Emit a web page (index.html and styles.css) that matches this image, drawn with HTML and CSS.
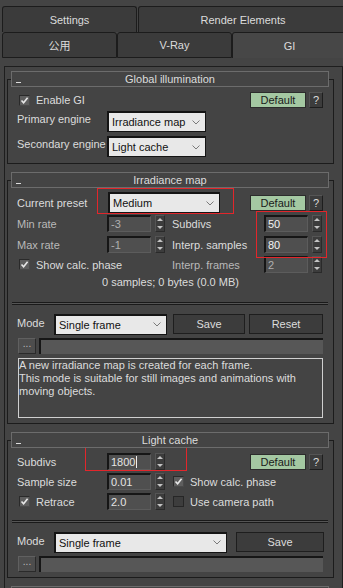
FILE: index.html
```html
<!DOCTYPE html>
<html>
<head lang="en">
    <meta charset="UTF-8">
    <title>GI</title>
    <link rel="stylesheet" href="styles.css">
</head>
<body>
<div class="tabs">
    <div class="tabrow">
        <div class="tab t-settings">Settings</div>
        <div class="tab t-render">Render Elements</div>
    </div>
    <div class="tabrow">
        <div class="tab t-common">公用</div>
        <div class="tab t-vray">V-Ray</div>
        <div class="tab t-gi active">GI</div>
    </div>
</div>

<div class="panel">
    <!-- Global illumination -->
    <div class="rollout">
        <div class="rhead"><i class="minus"></i><span>Global illumination</span><i></i></div>
        <div class="rbody gi-body">
            <div class="row h16">
                <span class="chk"><svg viewBox="0 0 9 9"><path d="M1.5 4.5 L3.6 6.8 L7.6 1.8"/></svg></span>
                <span class="clabel">Enable GI</span>
                <div class="defwrap">
                    <span class="btn def">Default</span>
                    <span class="btn help">?</span>
                </div>
            </div>
            <div class="row h21 mt3">
                <span class="lbl up">Primary engine</span>
                <div class="dd w99"><span>Irradiance map</span><svg viewBox="0 0 8 5"><path d="M0.5 0.5 L4 4 L7.5 0.5"/></svg></div>
            </div>
            <div class="row h21 mt4">
                <span class="lbl up">Secondary engine</span>
                <div class="dd w99"><span>Light cache</span><svg viewBox="0 0 8 5"><path d="M0.5 0.5 L4 4 L7.5 0.5"/></svg></div>
            </div>
        </div>
    </div>

    <!-- Irradiance map -->
    <div class="rollout">
        <div class="rhead"><i class="minus"></i><span>Irradiance map</span><i></i></div>
        <div class="rbody ir-body">
            <div class="row h21">
                <span class="lbl w91">Current preset</span>
                <div class="dd w112"><span>Medium</span><svg viewBox="0 0 8 5"><path d="M0.5 0.5 L4 4 L7.5 0.5"/></svg></div>
                <div class="defwrap">
                    <span class="btn def">Default</span>
                    <span class="btn help">?</span>
                </div>
            </div>
            <div class="row h17 mt2">
                <div class="cell">
                    <span class="lbl dim">Min rate</span>
                    <span class="spin"><span class="num dis">-3</span><span class="arr"><i class="au"></i><i class="ad"></i></span></span>
                </div>
                <span class="lbl-r">Subdivs</span>
                <span class="spin"><span class="num hi">50</span><span class="arr"><i class="au"></i><i class="ad"></i></span></span>
            </div>
            <div class="row h17 mt4">
                <div class="cell">
                    <span class="lbl dim">Max rate</span>
                    <span class="spin"><span class="num dis">-1</span><span class="arr"><i class="au"></i><i class="ad"></i></span></span>
                </div>
                <span class="lbl-r">Interp. samples</span>
                <span class="spin"><span class="num hi">80</span><span class="arr"><i class="au"></i><i class="ad"></i></span></span>
            </div>
            <div class="row h17 mt3">
                <div class="cell">
                    <span class="chk"><svg viewBox="0 0 9 9"><path d="M1.5 4.5 L3.6 6.8 L7.6 1.8"/></svg></span>
                    <span class="clabel">Show calc. phase</span>
                </div>
                <span class="lbl-r dim">Interp. frames</span>
                <span class="spin"><span class="num dis">2</span><span class="arr"><i class="au"></i><i class="ad"></i></span></span>
            </div>
            <div class="info">0 samples; 0 bytes (0.0 MB)</div>
            <div class="dline"></div>
            <div class="row h20 mt9">
                <span class="lbl-mode">Mode</span>
                <div class="dd w113"><span>Single frame</span><svg viewBox="0 0 8 5"><path d="M0.5 0.5 L4 4 L7.5 0.5"/></svg></div>
                <span class="btn b-save">Save</span>
                <span class="btn b-reset">Reset</span>
            </div>
            <div class="row h16 mt4">
                <span class="dots">...</span>
                <span class="path"></span>
            </div>
            <div class="desc">A new irradiance map is created for each frame.<br>This mode is suitable for still images and animations with moving objects.</div>
        </div>
    </div>

    <!-- Light cache -->
    <div class="rollout">
        <div class="rhead"><i class="minus"></i><span>Light cache</span><i></i></div>
        <div class="rbody lc-body">
            <div class="row h17">
                <span class="lbl">Subdivs</span>
                <span class="spin"><span class="num">1800<b class="caret"></b></span><span class="arr"><i class="au"></i><i class="ad"></i></span></span>
                <div class="defwrap">
                    <span class="btn def">Default</span>
                    <span class="btn help">?</span>
                </div>
            </div>
            <div class="row h17 mt3">
                <span class="lbl">Sample size</span>
                <span class="spin"><span class="num">0.01</span><span class="arr"><i class="au"></i><i class="ad"></i></span></span>
                <span class="chk right"><svg viewBox="0 0 9 9"><path d="M1.5 4.5 L3.6 6.8 L7.6 1.8"/></svg></span>
                <span class="clabel">Show calc. phase</span>
            </div>
            <div class="row h17 mt3">
                <div class="cell90">
                    <span class="chk"><svg viewBox="0 0 9 9"><path d="M1.5 4.5 L3.6 6.8 L7.6 1.8"/></svg></span>
                    <span class="clabel">Retrace</span>
                </div>
                <span class="spin"><span class="num">2.0</span><span class="arr"><i class="au"></i><i class="ad"></i></span></span>
                <span class="chk right off"></span>
                <span class="clabel">Use camera path</span>
            </div>
            <div class="dline lc-line"></div>
            <div class="row h20 mt9">
                <span class="lbl-mode">Mode</span>
                <div class="dd w173"><span>Single frame</span><svg viewBox="0 0 8 5"><path d="M0.5 0.5 L4 4 L7.5 0.5"/></svg></div>
                <span class="btn b-save2">Save</span>
            </div>
            <div class="row h16 mt4">
                <span class="dots">...</span>
                <span class="path"></span>
            </div>
        </div>
    </div>

    <!-- next rollout, cut off -->
    <div class="rollout">
        <div class="rhead"></div>
    </div>
</div>

<!-- red annotation boxes -->
<div class="mark m1"></div>
<div class="mark m2"></div>
<div class="mark m3"></div>
</body>
</html>
```

FILE: styles.css
```css
* {
    box-sizing: border-box;
}
body {
    margin: 0;
    width: 343px;
    height: 588px;
    overflow: hidden;
    background: #444;
    font-family: "Liberation Sans", Arial, "Noto Sans CJK SC", sans-serif;
    font-size: 11px;
    color: #dcdcdc;
}

/* tabs */
.tabs {
    padding-top: 6px;
}
.tabrow {
    display: flex;
    padding-left: 2px;
}
.tab {
    height: 26px;
    display: flex;
    align-items: center;
    justify-content: center;
    background: #3b3b3b;
    border: 1px solid #1c1c1c;
    border-bottom: none;
    border-radius: 3px 3px 0 0;
    flex: none;
}
.t-settings { width: 135px; }
.t-render { width: 210px; margin-left: 1px; }
.t-common { width: 115px; border-bottom: 1px solid #1c1c1c; }
.t-vray { width: 115px; border-bottom: 1px solid #1c1c1c; }
.t-gi { width: 115px; }
.tab.active {
    background: #474747;
}

/* rollout panel */
.panel {
    margin: 8px 0 0 4px;
    width: 339px;
    height: 522px;
    border: 1px solid #1e1e1e;
    border-bottom: none;
    padding: 4px 0 0 2px;
    overflow: hidden;
}
.rollout {
    width: 327px;
    margin-bottom: 8px;
}
.rhead {
    position: relative;
    z-index: 1;
    margin: 0 5px 0 4px;
    height: 16px;
    border: 1px solid #6c6c6c;
    background: #444;
    display: grid;
    grid-template-columns: 12px 1fr 12px;
    align-items: center;
    line-height: 14px;
    text-align: center;
}
.minus {
    align-self: end;
    margin: 0 0 3px 4px;
    width: 5px;
    height: 1px;
    background: #ddd;
}
.rbody {
    margin-top: -8px;
    border: 1px solid #1c1c1c;
    padding: 12px 10px 6px 9px;
}
.ir-body { padding-top: 11px; padding-bottom: 5px; }
.lc-body { padding-bottom: 5px; }

.row {
    display: flex;
    align-items: center;
}
.h16 { height: 16px; }
.h17 { height: 17px; }
.h20 { height: 20px; }
.h21 { height: 21px; }
.mt2 { margin-top: 2px; }
.mt3 { margin-top: 3px; }
.mt4 { margin-top: 4px; }
.mt9 { margin-top: 9px; }

.lbl {
    width: 90px;
    flex: none;
    white-space: nowrap;
}
.lbl.w91 { width: 91px; }
.lbl.up { margin-top: -5px; }
.lbl-r {
    width: 92px;
    margin-left: 7px;
    flex: none;
    white-space: nowrap;
}
.dim { color: #b9b9b9; }
.cell {
    width: 148px;
    display: flex;
    align-items: center;
    flex: none;
}
.cell90 {
    width: 90px;
    display: flex;
    align-items: center;
    flex: none;
}

/* checkbox */
.chk {
    width: 11px;
    height: 11px;
    margin-left: 2px;
    background: #5e5e5e;
    border: 1px solid #2a2a2a;
    border-right-color: #4a4a4a;
    border-bottom-color: #4a4a4a;
    display: flex;
    flex: none;
}
.chk svg {
    width: 9px;
    height: 9px;
}
.chk path {
    fill: none;
    stroke: #e8e8e8;
    stroke-width: 1.6;
}
.chk.off {
    background: #3d3d3d;
    border-color: #262626;
}
.chk.right { margin-left: 8px; }
.clabel {
    margin-left: 6px;
    white-space: nowrap;
}

/* buttons */
.defwrap {
    margin-left: auto;
    display: flex;
    gap: 3px;
}
.btn {
    height: 16px;
    display: flex;
    align-items: center;
    justify-content: center;
    background: #3c3c3c;
    border: 1px solid #1e1e1e;
    color: #dcdcdc;
    flex: none;
}
.btn.def {
    width: 56px;
    background: #a4c8a2;
    color: #1a1a1a;
    border-color: #2c2c2c;
}
.btn.help {
    width: 14px;
    border-top-color: #555;
    border-left-color: #555;
}
.b-save { width: 72px; height: 20px; margin-left: 6px; }
.b-reset { width: 74px; height: 20px; margin-left: 4px; }
.b-save2 { width: 88px; height: 20px; margin-left: 9px; }

/* dropdown */
.dd {
    height: 21px;
    display: flex;
    align-items: center;
    background: #e8e8e8;
    color: #111;
    border: 2px solid #141414;
    border-right-width: 1px;
    border-bottom-width: 1px;
    padding: 0 5px 0 3px;
    flex: none;
}
.dd span {
    flex: 1;
    white-space: nowrap;
}
.dd svg {
    width: 8px;
    height: 5px;
}
.dd path {
    fill: none;
    stroke: #7a7a7a;
    stroke-width: 1;
}
.w99 { width: 99px; }
.w112 { width: 112px; }
.w113 { width: 113px; }
.w173 { width: 173px; }
.lbl-mode {
    width: 37px;
    flex: none;
    margin-top: -3px;
}

/* spinner */
.spin {
    display: flex;
    gap: 4px;
    flex: none;
}
.num {
    width: 44px;
    height: 17px;
    background: #4f4f4f;
    border-top: 2px solid #161616;
    border-left: 2px solid #161616;
    border-right: 1px solid #5c5c5c;
    border-bottom: 1px solid #5c5c5c;
    padding-left: 2px;
    line-height: 14px;
    color: #e4e4e4;
    display: flex;
    align-items: center;
}
.num.dis { color: #b0b0b0; }
.num.hi { color: #f4f4f4; }
.caret {
    width: 1px;
    height: 12px;
    background: #eee;
    margin-left: 1px;
}
.arr {
    width: 10px;
    height: 17px;
    background: #3c3c3c;
    border: 1px solid #2a2a2a;
    border-top-color: #555;
    border-left-color: #555;
    display: flex;
    flex-direction: column;
    align-items: center;
    justify-content: space-around;
}
.au, .ad {
    width: 0;
    height: 0;
    border-left: 3px solid transparent;
    border-right: 3px solid transparent;
}
.au { border-bottom: 3px solid #c4c4c4; }
.ad { border-top: 3px solid #c4c4c4; }

.info {
    margin-top: 3px;
    height: 13px;
    line-height: 13px;
    text-align: center;
    margin-left: -9px;
    margin-right: -10px;
}
.dline {
    margin: 13px -5px 0 -5px;
    height: 3px;
    border-top: 1px solid #1a1a1a;
    border-bottom: 1px solid #1a1a1a;
    background: #555;
}
.lc-line { margin-top: 10px; }

.dots {
    width: 18px;
    height: 16px;
    flex: none;
    margin-left: 1px;
    background: #4d4d4d;
    border: 1px solid #2a2a2a;
    border-top-color: #606060;
    border-left-color: #606060;
    color: #bbb;
    font-size: 10px;
    line-height: 10px;
    text-align: center;
}
.path {
    flex: 1;
    height: 16px;
    margin-left: 3px;
    background: #575757;
    border-top: 2px solid #161616;
    border-left: 2px solid #161616;
}
.desc {
    margin: 4px 0 0 1px;
    height: 60px;
    border: 1px solid #d0d0d0;
    line-height: 13px;
    color: #dcdcdc;
}

/* annotations */
.mark {
    position: absolute;
    border: 1px solid #e2262b;
}
.m1 { left: 97px; top: 188px; width: 137px; height: 26px; }
.m2 { left: 256px; top: 211px; width: 71px; height: 47px; }
.m3 { left: 85px; top: 443px; width: 102px; height: 28px; }
```
